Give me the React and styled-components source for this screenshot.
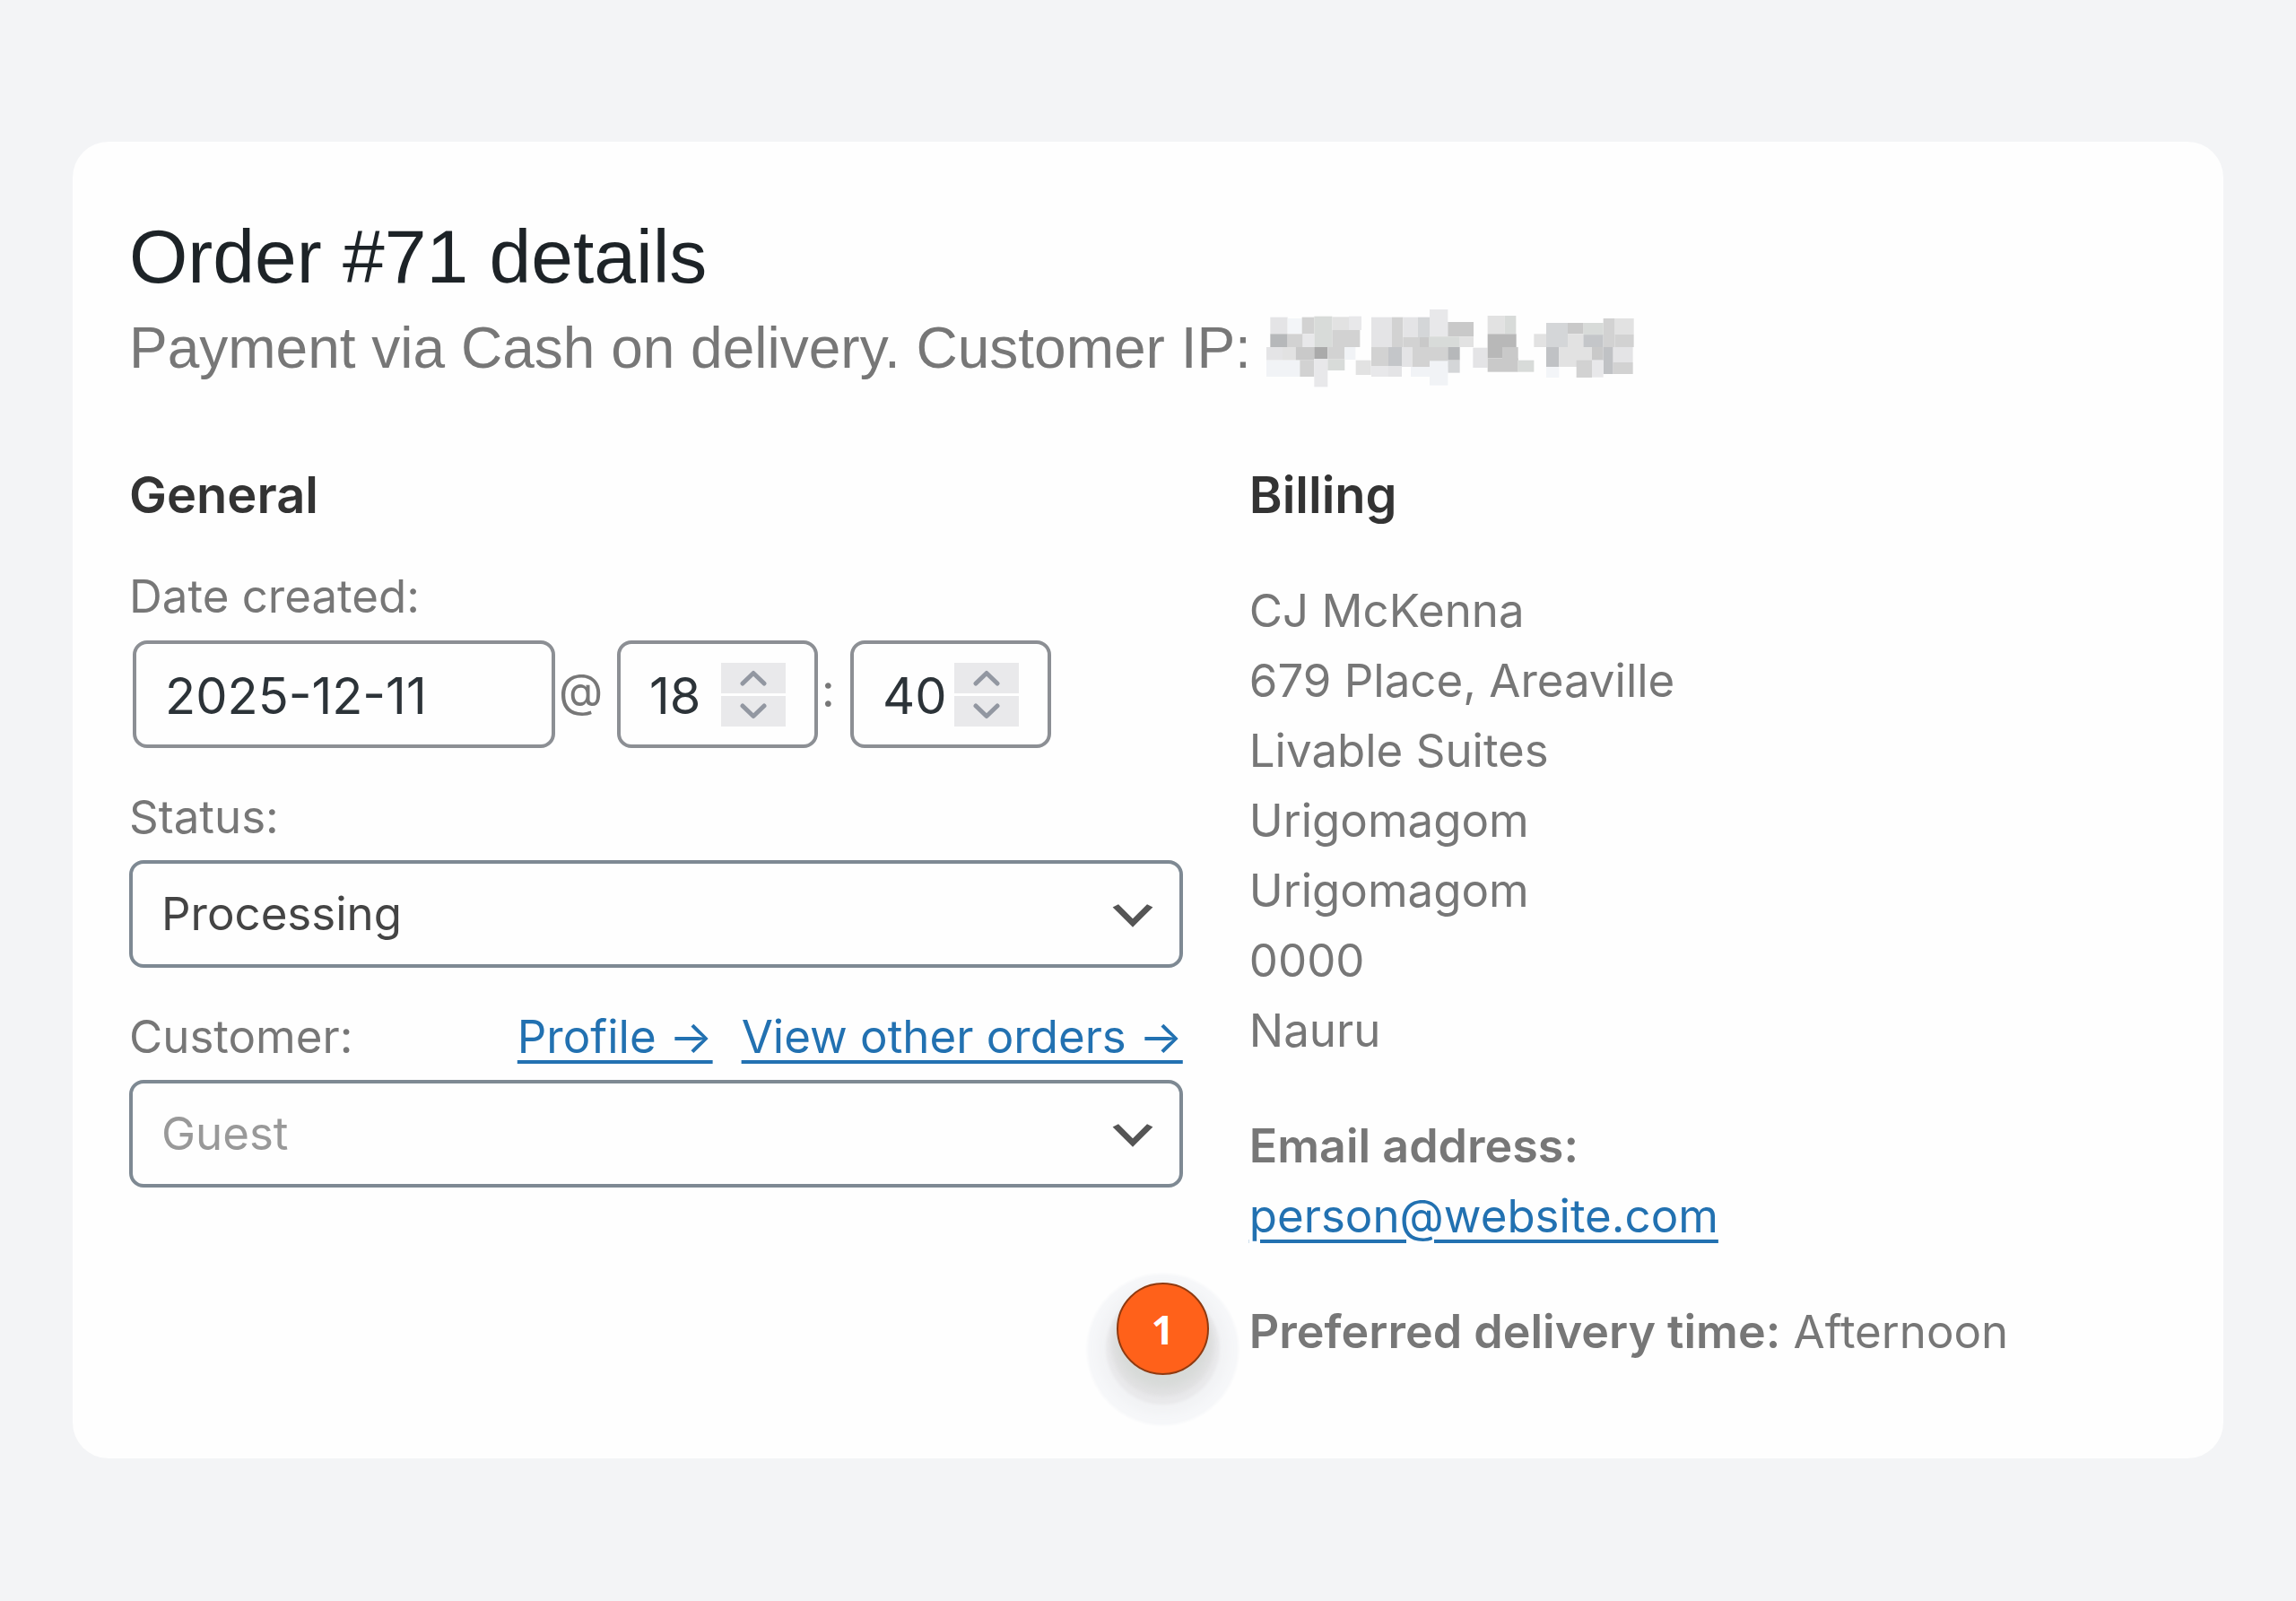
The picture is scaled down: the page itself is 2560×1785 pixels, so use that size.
import React, { useState } from 'react';
import styled, { createGlobalStyle } from 'styled-components';

const GlobalStyle = createGlobalStyle`
  *, *::before, *::after {
    box-sizing: border-box;
  }

  body {
    margin: 0;
    background: #f3f4f6;
    color: #777;
    font: 400 51px/78px Inter, sans-serif;
  }

  h2, h3, p, address {
    margin: 0;
  }
`;

const Page = styled.main`
  min-height: 100vh;
  padding: 158px 81px;
`;

const Card = styled.section`
  padding: 80px 63px 102px;
  border-radius: 40px;
  background: #fefefe;
`;

const Title = styled.h2`
  color: #1d2327;
  font: 400 84px/96px "Liberation Sans", sans-serif;
`;

const Summary = styled.p`
  display: flex;
  align-items: center;
  gap: 17px;
  height: 80px;
  margin-top: 14px;
  font: 400 64px/80px "Liberation Sans", sans-serif;
`;

const Columns = styled.div`
  display: grid;
  grid-template-columns: 31fr 27fr;
  column-gap: 74px;
  margin-top: 82px;
`;

const Heading = styled.h3`
  color: #333;
  font-size: 56px;
  font-weight: 600;
  line-height: 84px;
`;

const Field = styled.div`
  margin-top: ${(props) => (props.$first ? 32 : 38)}px;
`;

const LabelRow = styled.div`
  display: flex;
  justify-content: space-between;
  margin-bottom: 9px;
`;

const Links = styled.div`
  display: flex;
  gap: 32px;
`;

const Link = styled.a`
  color: #2271b1;
  text-decoration: underline;
  text-decoration-thickness: 4px;
  text-underline-offset: 8px;
`;

const DateRow = styled.div`
  display: grid;
  grid-template-columns: 471px 69px 224px 36px 224px;
  align-items: center;
  padding: 1px 0 0 4px;
`;

const Separator = styled.span`
  padding: 0 0 8px 4px;
`;

const DateInput = styled.input`
  width: 100%;
  height: 120px;
  padding: 4px 32px 0;
  border: 4px solid #8c8f94;
  border-radius: 16px;
  background: #fefefe;
  color: #2c3338;
  font: 400 56px/80px Inter, sans-serif;
`;

const TimeBox = styled.div`
  display: flex;
  align-items: center;
  height: 120px;
  padding: 0 32px;
  border: 4px solid #8c8f94;
  border-radius: 16px;
`;

const TimeInput = styled.input`
  flex: 1;
  min-width: 0;
  padding: 4px 0 0;
  border: 0;
  background: none;
  color: #2c3338;
  font: 400 56px/80px Inter, sans-serif;
  appearance: textfield;

  &::-webkit-inner-spin-button {
    display: none;
  }
`;

const Stepper = styled.div`
  display: grid;
  gap: 3px;
  width: 72px;
`;

const StepButton = styled.button`
  display: flex;
  align-items: center;
  justify-content: center;
  height: 34px;
  padding: 0;
  border: 0;
  background: #e9e9eb;
  color: #9297a1;
`;

const SelectBox = styled.div`
  position: relative;

  svg {
    position: absolute;
    top: 30px;
    right: 24px;
    pointer-events: none;
  }
`;

const Select = styled.select`
  display: block;
  width: 100%;
  height: 120px;
  padding: 0 96px 0 32px;
  border: 4px solid #7e8993;
  border-radius: 16px;
  background: #fefefe;
  color: ${(props) => (props.$muted ? '#999' : '#444')};
  font: 400 51px/78px Inter, sans-serif;
  appearance: none;
`;

const Address = styled.address`
  margin-top: 48px;
  font-style: normal;
`;

const Detail = styled.p`
  position: relative;
  margin-top: 51px;

  strong {
    font-size: 52px;
    font-weight: 600;
  }
`;

const Marker = styled.span`
  position: absolute;
  top: -16px;
  left: -148px;
  display: flex;
  align-items: center;
  justify-content: center;
  width: 103px;
  height: 103px;
  border: 2px solid #8f3a10;
  border-radius: 50%;
  background: #ff611a;
  box-shadow:
    0 14px 10px 0 #d7dad8,
    0 18px 4px 6px #e1e1e2,
    0 21px 3px 12px #e9e9eb,
    0 22px 8px 22px #f2f3f5,
    0 23px 3px 33px #f6f7f9;
  color: #fff;
  font: 700 44px/60px "Open Sans", sans-serif;
`;

// [x, y, width, height, fill]
const blocks = [
  [107, 71, 58, 56, '#e4e4e6'], [165, 75, 48, 52, '#f3f5f8'], [213, 71, 41, 56, '#d2d2d2'],
  [254, 68, 60, 103, '#d8dbd9'], [314, 70, 56, 44, '#e2e2e2'], [370, 68, 42, 46, '#e8e8ea'],
  [107, 127, 58, 44, '#b6b8ba'], [165, 127, 51, 44, '#d2d2d2'], [216, 127, 38, 44, '#e8e8ea'],
  [314, 114, 93, 57, '#d2d2d2'], [94, 171, 54, 44, '#e4e4e6'], [148, 171, 44, 44, '#e2e2e2'],
  [192, 171, 62, 44, '#c9c9c9'], [254, 171, 45, 39, '#aaaaaa'], [299, 171, 57, 41, '#d2d2d2'],
  [356, 171, 36, 42, '#f1f3f6'], [94, 215, 112, 55, '#f1f3f6'], [206, 215, 48, 55, '#d2d2d2'],
  [254, 210, 45, 94, '#e8e8ea'], [299, 212, 57, 37, '#d8dbd9'], [393, 215, 51, 49, '#e2e2e2'],
  [445, 71, 69, 100, '#e4e4e6'], [514, 71, 37, 100, '#d2d2d2'], [551, 71, 49, 67, '#e4e4e6'],
  [600, 71, 40, 67, '#d4d6d8'], [640, 45, 61, 93, '#e8e8ea'], [701, 87, 86, 49, '#c9c9c9'],
  [551, 138, 56, 33, '#d2d2d2'], [607, 138, 30, 33, '#c9c9c9'], [637, 136, 102, 35, '#d8dbd9'],
  [739, 136, 48, 35, '#e2e2e2'], [445, 171, 57, 63, '#d2d2d2'], [502, 171, 45, 63, '#c4c6c9'],
  [547, 171, 35, 66, '#e4e4e6'], [582, 171, 119, 66, '#d2d2d2'], [701, 171, 40, 44, '#b6b8ba'],
  [701, 215, 40, 42, '#d4d6d8'], [445, 234, 57, 36, '#e8e8ea'], [502, 234, 45, 36, '#e4e4e6'],
  [577, 237, 63, 33, '#f1f3f6'], [640, 217, 61, 82, '#f1f3f6'], [785, 173, 49, 67, '#e4e4e6'],
  [834, 66, 57, 61, '#e2e2e2'], [891, 66, 38, 61, '#d8dbd9'], [834, 127, 96, 81, '#b8b8b8'],
  [883, 171, 53, 45, '#c9c9c9'], [834, 208, 102, 46, '#c9c9c9'], [936, 215, 53, 39, '#d8dbd9'],
  [989, 127, 41, 44, '#e2e2e2'], [1030, 90, 72, 81, '#d4d6d8'], [1102, 90, 53, 37, '#c9c9c9'],
  [1102, 127, 54, 60, '#e2e2e2'], [1155, 90, 66, 42, '#d8dbd9'], [1155, 130, 66, 41, '#c4c6c9'],
  [1221, 75, 39, 96, '#d2d2d2'], [1260, 75, 63, 53, '#e2e2e2'], [1260, 128, 63, 43, '#d2d2d2'],
  [1030, 171, 43, 66, '#c0c2c5'], [1073, 171, 110, 66, '#e2e2e2'], [1183, 171, 38, 44, '#c9c9c9'],
  [1221, 171, 33, 90, '#c0c2c5'], [1254, 171, 66, 51, '#e4e4e6'], [1254, 222, 66, 39, '#d2d2d2'],
  [1030, 237, 43, 36, '#f3f5f8'], [1131, 215, 52, 58, '#d2d2d2'], [1183, 215, 38, 57, '#e8e8ea'],
];

const HiddenIp = () => (
  <svg width="410" height="87" viewBox="94 45 1230 261" role="img" aria-label="Hidden">
    {blocks.map(([x, y, width, height, fill]) => (
      <rect key={`${x}-${y}`} x={x} y={y} width={width} height={height} fill={fill} />
    ))}
  </svg>
);

const Chevron = () => (
  <svg width="64" height="64" viewBox="0 0 20 20" aria-hidden="true">
    <path d="M5 6l5 5 5-5 2 1-7 7-7-7 2-1z" fill="#555" />
  </svg>
);

const Caret = ({ up }) => (
  <svg width="30" height="18" viewBox="0 0 30 18" aria-hidden="true">
    <path
      d={up ? 'M3 15L15 3.5L27 15' : 'M3 3L15 14.5L27 3'}
      fill="none"
      stroke="currentColor"
      strokeWidth="5"
      strokeLinecap="round"
      strokeLinejoin="round"
    />
  </svg>
);

const TimeField = (props) => {
  const { label, initial, max } = props;
  const [value, setValue] = useState(initial);
  const step = (by) => setValue(Math.min(max, Math.max(0, Number(value) + by)));

  return (
    <TimeBox>
      <TimeInput
        type="number"
        min="0"
        max={max}
        aria-label={label}
        value={value}
        onChange={(e) => setValue(e.target.value)}
      />
      <Stepper>
        <StepButton type="button" aria-label={`Increase ${label}`} onClick={() => step(1)}>
          <Caret up />
        </StepButton>
        <StepButton type="button" aria-label={`Decrease ${label}`} onClick={() => step(-1)}>
          <Caret />
        </StepButton>
      </Stepper>
    </TimeBox>
  );
};

const General = () => (
  <div>
    <Heading>General</Heading>
    <Field $first>
      <LabelRow>
        <label htmlFor="date">Date created:</label>
      </LabelRow>
      <DateRow>
        <DateInput id="date" type="text" defaultValue="2025-12-11" />
        <Separator>@</Separator>
        <TimeField label="hour" initial={18} max={23} />
        <Separator>:</Separator>
        <TimeField label="minute" initial={40} max={59} />
      </DateRow>
    </Field>
    <Field>
      <LabelRow>
        <label htmlFor="status">Status:</label>
      </LabelRow>
      <SelectBox>
        <Select id="status">
          <option>Processing</option>
        </Select>
        <Chevron />
      </SelectBox>
    </Field>
    <Field>
      <LabelRow>
        <label htmlFor="customer">Customer:</label>
        <Links>
          <Link href="#profile">Profile →</Link>
          <Link href="#orders">View other orders →</Link>
        </Links>
      </LabelRow>
      <SelectBox>
        <Select id="customer" $muted>
          <option>Guest</option>
        </Select>
        <Chevron />
      </SelectBox>
    </Field>
  </div>
);

const Billing = () => (
  <div>
    <Heading>Billing</Heading>
    <Address>
      CJ McKenna<br />
      679 Place, Areaville<br />
      Livable Suites<br />
      Urigomagom<br />
      Urigomagom<br />
      0000<br />
      Nauru
    </Address>
    <Detail>
      <strong>Email address:</strong><br />
      <Link href="mailto:person@website.com">person@website.com</Link>
    </Detail>
    <Detail>
      <Marker>1</Marker>
      <strong>Preferred delivery time:</strong> Afternoon
    </Detail>
  </div>
);

const App = () => (
  <Page>
    <GlobalStyle />
    <Card>
      <Title>Order #71 details</Title>
      <Summary>
        Payment via Cash on delivery. Customer IP:
        <HiddenIp />
      </Summary>
      <Columns>
        <General />
        <Billing />
      </Columns>
    </Card>
  </Page>
);

export default App;
